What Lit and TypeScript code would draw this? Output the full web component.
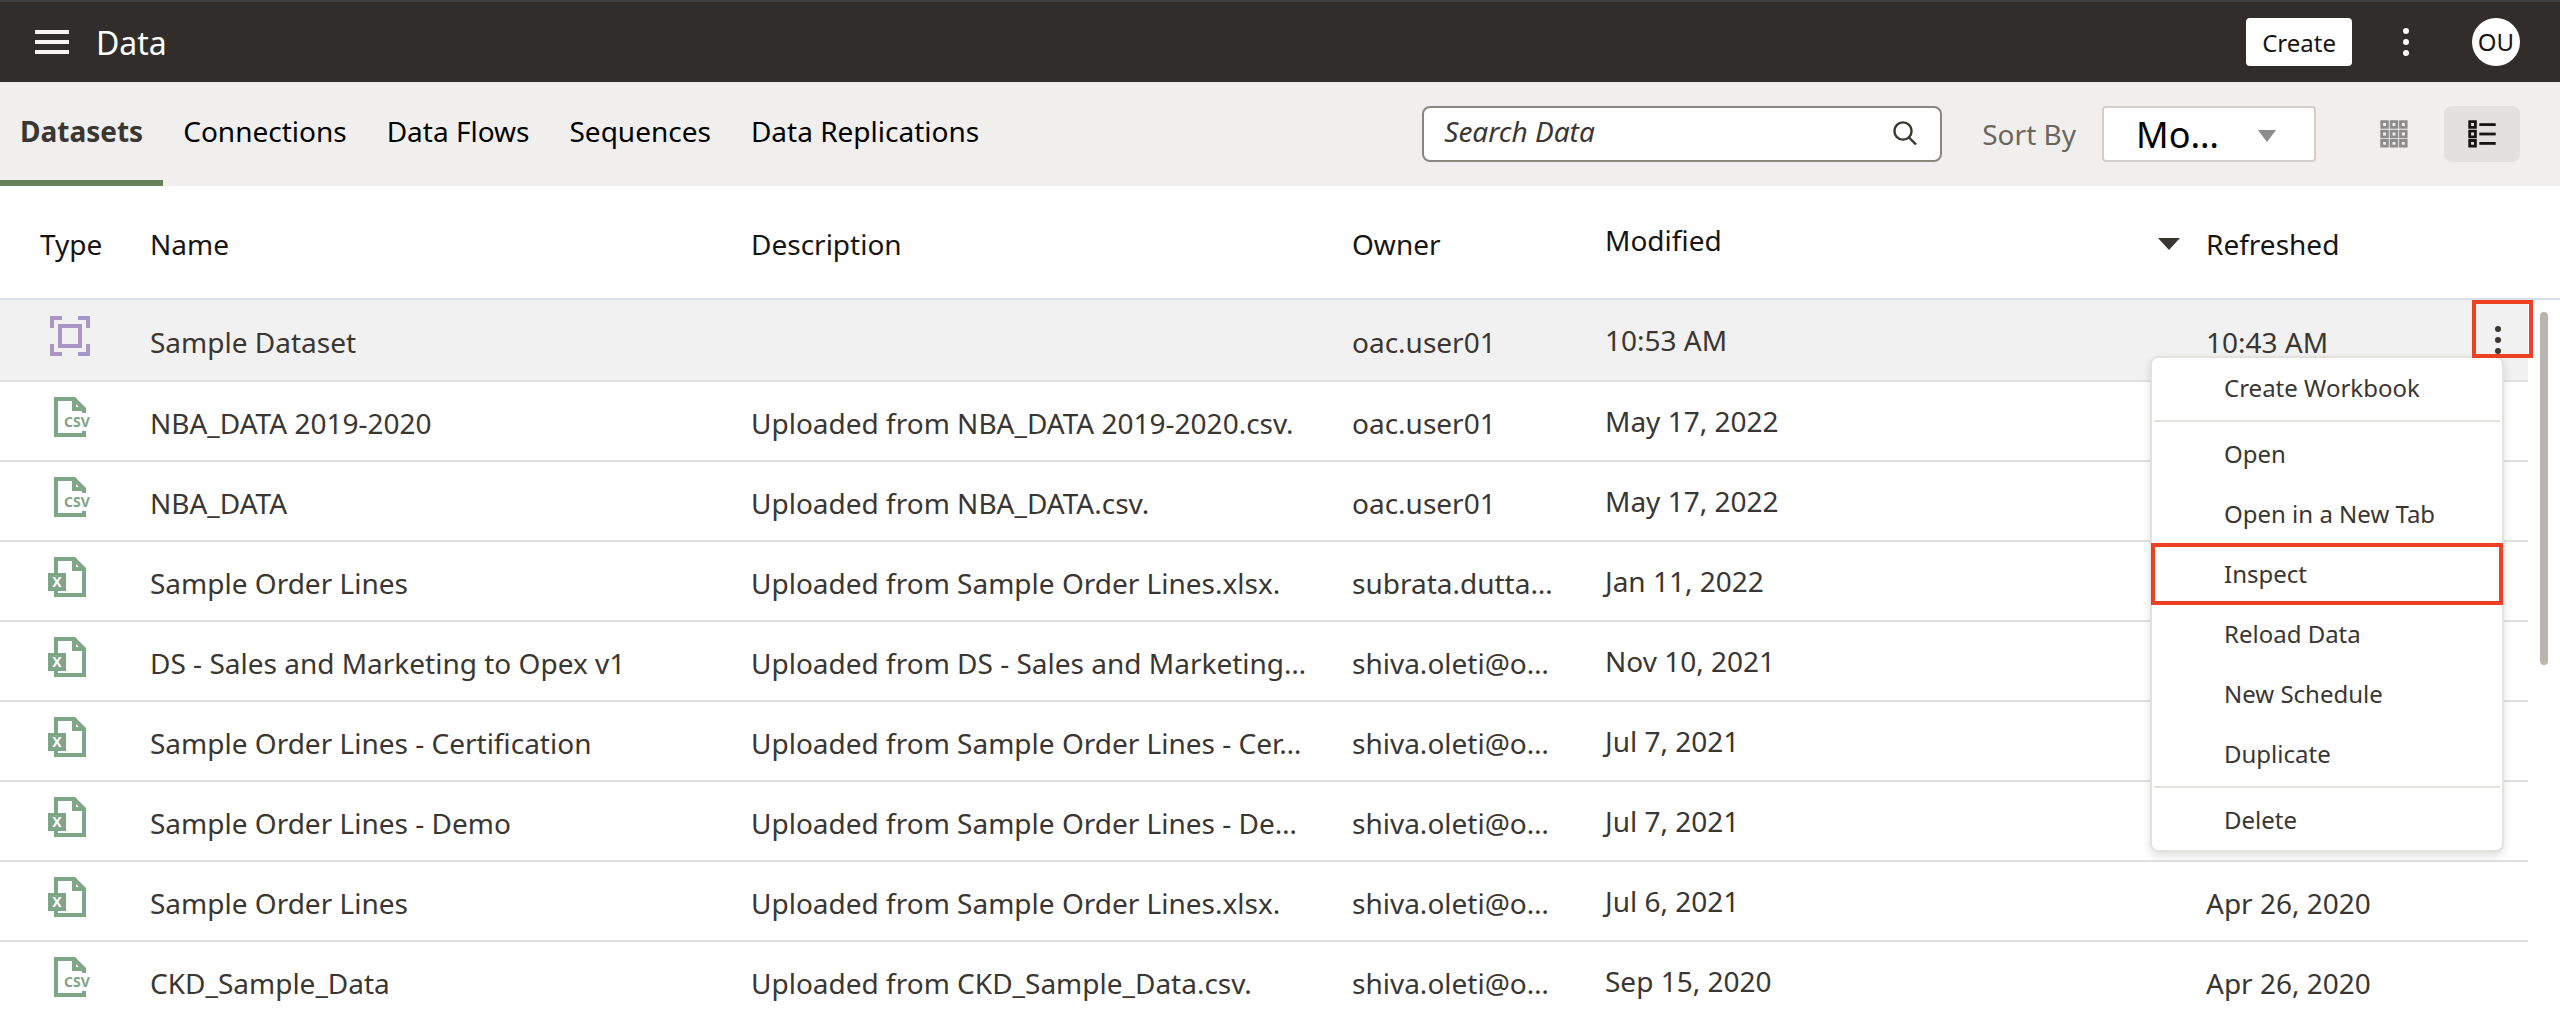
import { LitElement, html, css, svg, nothing } from "lit";
import { customElement, state } from "lit/decorators.js";
import { classMap } from "lit/directives/class-map.js";

type Kind = "dataset" | "csv" | "excel";

interface Row {
  kind: Kind;
  name: string;
  description: string;
  owner: string;
  modified: string;
  refreshed: string;
}

const TABS = ["Datasets", "Connections", "Data Flows", "Sequences", "Data Replications"];

const ROWS: Row[] = [
  { kind: "dataset", name: "Sample Dataset", description: "", owner: "oac.user01", modified: "10:53 AM", refreshed: "10:43 AM" },
  { kind: "csv", name: "NBA_DATA 2019-2020", description: "Uploaded from NBA_DATA 2019-2020.csv.", owner: "oac.user01", modified: "May 17, 2022", refreshed: "" },
  { kind: "csv", name: "NBA_DATA", description: "Uploaded from NBA_DATA.csv.", owner: "oac.user01", modified: "May 17, 2022", refreshed: "" },
  { kind: "excel", name: "Sample Order Lines", description: "Uploaded from Sample Order Lines.xlsx.", owner: "subrata.dutta…", modified: "Jan 11, 2022", refreshed: "" },
  { kind: "excel", name: "DS - Sales and Marketing to Opex v1", description: "Uploaded from DS - Sales and Marketing…", owner: "shiva.oleti@o…", modified: "Nov 10, 2021", refreshed: "" },
  { kind: "excel", name: "Sample Order Lines - Certification", description: "Uploaded from Sample Order Lines - Cer…", owner: "shiva.oleti@o…", modified: "Jul 7, 2021", refreshed: "" },
  { kind: "excel", name: "Sample Order Lines - Demo", description: "Uploaded from Sample Order Lines - De…", owner: "shiva.oleti@o…", modified: "Jul 7, 2021", refreshed: "" },
  { kind: "excel", name: "Sample Order Lines", description: "Uploaded from Sample Order Lines.xlsx.", owner: "shiva.oleti@o…", modified: "Jul 6, 2021", refreshed: "Apr 26, 2020" },
  { kind: "csv", name: "CKD_Sample_Data", description: "Uploaded from CKD_Sample_Data.csv.", owner: "shiva.oleti@o…", modified: "Sep 15, 2020", refreshed: "Apr 26, 2020" },
];

const MENU: string[][] = [
  ["Create Workbook"],
  ["Open", "Open in a New Tab", "Inspect", "Reload Data", "New Schedule", "Duplicate"],
  ["Delete"],
];

/** Start of each of the three cells along one side of the view icons. */
const CELLS = [0.3, 9.7, 19.1];

const fold = svg`<path fill-rule="evenodd" d="M26 0H29L40 11V14H26ZM30 7V10H33Z"/>`;

const typeIcon = (kind: Kind) => {
  if (kind === "dataset") {
    return html`<svg class="type dataset" viewBox="0 0 48 40" role="img" aria-label="Dataset">
      <path d="M4 0H16V4H8V12H4ZM32 0H44V12H40V4H32ZM4 28H8V36H16V40H4ZM40 28H44V40H32V36H40Z"/>
      <path fill-rule="evenodd" d="M12 8H36V32H12ZM16 12V28H32V12Z"/>
    </svg>`;
  }
  if (kind === "csv") {
    return html`<svg class="type file" viewBox="0 0 48 40" role="img" aria-label="CSV file">
      <path d="M8 0H29V4H12V36H36V34H40V40H8Z"/>
      ${fold}
      <path d="M36 12H40V16H36Z"/>
      <text class="csv" x="18" y="30">CSV</text>
    </svg>`;
  }
  return html`<svg class="type file" viewBox="0 0 48 40" role="img" aria-label="Excel file">
    <path d="M8 0H29V4H12V36H36V12H40V40H8Z"/>
    ${fold}
    <rect x="2" y="16" width="18" height="18"/>
    <text class="excel" x="11" y="30">X</text>
  </svg>`;
};

const kebab = html`<svg class="kebab" viewBox="0 0 12 28" aria-hidden="true">
  <circle cx="6" cy="3" r="3"/><circle cx="6" cy="14" r="3"/><circle cx="6" cy="25" r="3"/>
</svg>`;

@customElement("app-root")
export class AppRoot extends LitElement {
  @state() private tab = "Datasets";
  @state() private view: "grid" | "list" = "list";
  @state() private menuRow = 0;

  static styles = css`
    :host {
      display: flex;
      flex-direction: column;
      height: 100vh;
      overflow: hidden;
      background: #fff;
      color: #3a3631;
      font-family: "Noto Sans", "Open Sans", sans-serif;
      font-size: 28px;
      line-height: 40px;
    }
    *, *::before, *::after { box-sizing: border-box; }
    button, input, select {
      font: inherit;
      color: inherit;
      margin: 0;
      padding: 0;
      border: 0;
      background: none;
      cursor: pointer;
    }
    svg { display: block; fill: currentColor; }

    .topbar {
      display: flex;
      align-items: center;
      flex: none;
      height: 82px;
      padding: 0 40px 0 32px;
      border-top: 2px solid #3d3f42;
      background: #312d2a;
      color: #fff;
    }
    .burger { padding: 0 3px; }
    .burger svg { width: 34px; height: 24px; fill: #f5f4f2; }
    .title {
      flex: 1;
      margin: 0;
      padding: 2px 0 0 24px;
      font-size: 32px;
      font-weight: 400;
    }
    .create {
      height: 48px;
      padding: 2px 16px 0;
      border-radius: 4px;
      background: #fff;
      color: #161513;
      font-size: 24px;
      line-height: 44px;
    }
    .more {
      display: flex;
      justify-content: center;
      width: 48px;
      margin: 0 42px 0 30px;
    }
    .kebab { width: 12px; height: 28px; }
    .avatar {
      width: 48px;
      height: 48px;
      border-radius: 50%;
      background: #fff;
      color: #161513;
      font-size: 24px;
      line-height: 48px;
      text-align: center;
    }

    .toolbar {
      display: flex;
      align-items: center;
      flex: none;
      height: 104px;
      padding-right: 40px;
      background: #f0efed;
    }
    .tabs { display: flex; flex: 1; align-self: stretch; }
    .tab {
      padding: 0 20px;
      border-bottom: 6px solid transparent;
      color: #000;
      white-space: nowrap;
    }
    .tab.active {
      border-color: #67805a;
      color: #3a3631;
      font-weight: 700;
    }
    .search {
      display: flex;
      align-items: center;
      width: 520px;
      height: 56px;
      margin-right: 40px;
      padding: 0 23px 2px 20px;
      border: 2px solid #8b8680;
      border-radius: 8px;
      background: #fff;
    }
    .search input {
      flex: 1;
      min-width: 0;
      height: 44px;
      padding-bottom: 4px;
      outline: 0;
      cursor: text;
    }
    .search input::placeholder { color: #3a3631; opacity: 1; font-style: italic; }
    .search svg { width: 24px; height: 24px; fill: none; stroke: currentColor; stroke-width: 2.4; }
    .sort { display: flex; align-items: center; gap: 26px; color: #6b6560; }
    .select { display: grid; align-items: center; width: 214px; }
    .select select, .select svg { grid-area: 1 / 1; }
    .select select {
      width: 100%;
      height: 56px;
      padding: 2px 84px 0 32px;
      appearance: none;
      border: 2px solid #d2cfca;
      border-radius: 4px;
      background: #fff;
      color: #000;
      font-size: 36px;
      text-overflow: ellipsis;
    }
    .select svg {
      justify-self: end;
      width: 18px;
      height: 12px;
      margin: 4px 40px 0 0;
      fill: #8c8c8e;
      pointer-events: none;
    }
    .views { display: flex; gap: 12px; margin-left: 40px; }
    .view {
      display: grid;
      place-items: center;
      width: 76px;
      height: 56px;
      border-radius: 8px;
      color: #8c8c8c;
    }
    .view.active { background: #e2e1dd; color: #161513; }
    .view svg { width: 28px; height: 28px; }

    .content { display: flex; flex: 1; min-height: 0; }
    table {
      flex: 1;
      align-self: flex-start;
      width: 0;
      table-layout: fixed;
      border-spacing: 0;
    }
    .c-type { width: 150px; }
    .c-owner { width: 253px; }
    .c-refreshed { width: 264px; }
    .c-actions { width: 58px; }
    th {
      height: 114px;
      padding: 4px 0 0;
      border-bottom: 2px solid #d9dfe6;
      color: #161513;
      font-weight: 400;
      text-align: left;
    }
    th.type-head { padding-left: 40px; }
    th.modified { padding: 0 26px 4px 0; }
    .sorted { display: flex; justify-content: space-between; align-items: center; }
    .sorted svg { width: 22px; height: 12px; margin-top: 8px; color: #3a3631; }
    td {
      height: 80px;
      padding: 4px 0 0;
      border-bottom: 2px solid #e0e0e0;
      white-space: nowrap;
    }
    .selected td { height: 82px; background: #f1f1f1; }
    td.icon { padding: 0 0 8px 46px; }
    td.modified { padding: 0; }
    td.actions { position: relative; padding: 0; }
    .type { width: 48px; height: 40px; overflow: visible; }
    .dataset { fill: #a897c6; }
    .file { fill: #7fa587; }
    .csv { font-size: 14px; font-weight: 700; }
    .excel { font-size: 14px; font-weight: 700; fill: #fff; text-anchor: middle; }
    .row-more {
      display: flex;
      justify-content: center;
      width: 56px;
    }
    .callout {
      position: absolute;
      z-index: 3;
      border: 4px solid #ef4023;
      pointer-events: none;
    }
    .callout.on-more { top: 0; left: 2px; width: 61px; height: 58px; }

    .menu {
      position: absolute;
      z-index: 2;
      top: 56px;
      right: 24px;
      width: 354px;
      border: 2px solid #e3e2dd;
      border-radius: 8px;
      background: #fff;
      box-shadow: 0 4px 8px rgba(0, 0, 0, 0.12);
      font-size: 24px;
    }
    .group + .group { margin: 2px 2px 0; padding-top: 2px; border-top: 2px solid #e3e2dd; }
    .group + .group .item { padding-left: 70px; }
    .callout.on-item { inset: -1px -3px; }
    .item {
      position: relative;
      display: block;
      width: 100%;
      height: 60px;
      padding-left: 72px;
      text-align: left;
    }

    .gutter { flex: none; width: 32px; }
    .gutter-head { height: 114px; border-bottom: 2px solid #d9dfe6; }
    .thumb {
      width: 8px;
      height: 353px;
      margin: 12px;
      border-radius: 4px;
      background: #b9b4af;
    }
  `;

  private renderMenu() {
    return html`<div class="menu" role="menu">
      ${MENU.map(
        (group) => html`<div class="group" role="group">
          ${group.map(
            (item) => html`<button class="item" role="menuitem">
              ${item}${item === "Inspect" ? html`<span class="callout on-item"></span>` : nothing}
            </button>`
          )}
        </div>`
      )}
    </div>`;
  }

  private renderRow(row: Row, index: number) {
    const open = index === this.menuRow;
    return html`<tr class=${classMap({ selected: open })}>
      <td class="icon">${typeIcon(row.kind)}</td>
      <td>${row.name}</td>
      <td>${row.description}</td>
      <td>${row.owner}</td>
      <td class="modified">${row.modified}</td>
      <td>${row.refreshed}</td>
      <td class="actions">
        ${open
          ? html`<button class="row-more" aria-label="Actions">${kebab}</button>
              ${this.renderMenu()}
              <span class="callout on-more"></span>`
          : nothing}
      </td>
    </tr>`;
  }

  render() {
    return html`
      <header class="topbar">
        <button class="burger" aria-label="Navigator">
          <svg viewBox="0 0 34 24" aria-hidden="true">
            <path d="M0 0H34V4H0ZM0 10H34V14H0ZM0 20H34V24H0Z"/>
          </svg>
        </button>
        <h1 class="title">Data</h1>
        <button class="create">Create</button>
        <button class="more" aria-label="Page menu">${kebab}</button>
        <button class="avatar">OU</button>
      </header>

      <div class="toolbar">
        <nav class="tabs" role="tablist">
          ${TABS.map(
            (name) => html`<button
              role="tab"
              aria-selected=${name === this.tab}
              class=${classMap({ tab: true, active: name === this.tab })}
              @click=${() => (this.tab = name)}
            >${name}</button>`
          )}
        </nav>
        <label class="search">
          <input type="text" placeholder="Search Data" aria-label="Search Data" />
          <svg viewBox="0 0 24 24" aria-hidden="true">
            <circle cx="10" cy="10" r="8.6"/><path d="M16 16.5L23 23.5"/>
          </svg>
        </label>
        <div class="sort">
          <label for="sort">Sort By</label>
          <div class="select">
            <select id="sort"><option>Modified</option></select>
            <svg viewBox="0 0 18 12" aria-hidden="true"><path d="M0 0H18L9 12Z"/></svg>
          </div>
        </div>
        <div class="views">
          <button
            class=${classMap({ view: true, active: this.view === "grid" })}
            aria-label="Grid view"
            @click=${() => (this.view = "grid")}
          >
            <svg viewBox="0 0 28 28" aria-hidden="true">
              ${CELLS.map((y) => CELLS.map((x) =>
                svg`<path fill-rule="evenodd" d=${`M${x} ${y}h8.5v8.5h-8.5Zm2.8 2.8v2.9h2.9v-2.9Z`}/>`
              ))}
            </svg>
          </button>
          <button
            class=${classMap({ view: true, active: this.view === "list" })}
            aria-label="List view"
            @click=${() => (this.view = "list")}
          >
            <svg viewBox="0 0 28 28" aria-hidden="true">
              ${CELLS.map((y) => svg`
                <path fill-rule="evenodd" d=${`M0.3 ${y}h8.5v8.5h-8.5Zm2.8 2.8v2.9h2.9v-2.9Z`}/>
                <rect x="11.3" y=${y + 2.9} width="16.4" height="2.8"/>`)}
            </svg>
          </button>
        </div>
      </div>

      <main class="content">
        <table>
          <colgroup>
            <col class="c-type" /><col /><col /><col class="c-owner" /><col />
            <col class="c-refreshed" /><col class="c-actions" />
          </colgroup>
          <thead>
            <tr>
              <th class="type-head">Type</th>
              <th>Name</th>
              <th>Description</th>
              <th>Owner</th>
              <th class="modified" aria-sort="descending">
                <div class="sorted">
                  Modified
                  <svg viewBox="0 0 22 12" aria-hidden="true"><path d="M0 0H22L11 12Z"/></svg>
                </div>
              </th>
              <th>Refreshed</th>
              <th></th>
            </tr>
          </thead>
          <tbody>${ROWS.map((row, i) => this.renderRow(row, i))}</tbody>
        </table>
        <div class="gutter">
          <div class="gutter-head"></div>
          <div class="thumb"></div>
        </div>
      </main>
    `;
  }
}
